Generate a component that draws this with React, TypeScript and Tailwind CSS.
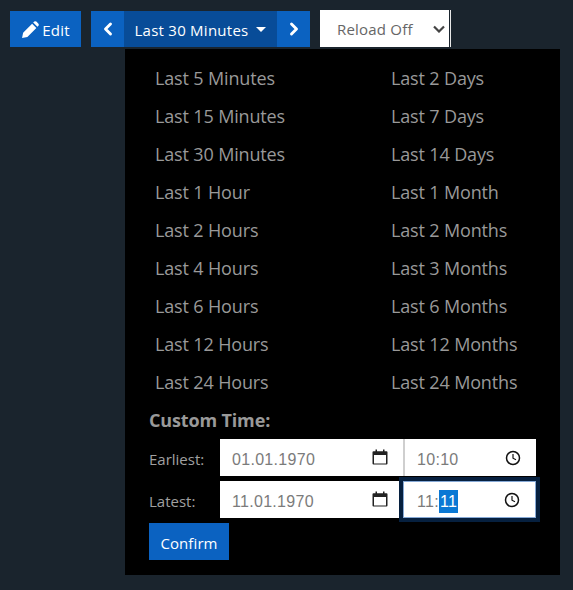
import { ChevronLeft, ChevronRight } from "lucide-react"

const leftRanges = ["Last 5 Minutes", "Last 15 Minutes", "Last 30 Minutes", "Last 1 Hour", "Last 2 Hours", "Last 4 Hours", "Last 6 Hours", "Last 12 Hours", "Last 24 Hours"]
const rightRanges = ["Last 2 Days", "Last 7 Days", "Last 14 Days", "Last 1 Month", "Last 2 Months", "Last 3 Months", "Last 6 Months", "Last 12 Months", "Last 24 Months"]

function CalendarIcon() {
  return (
    <svg width="16" height="16" viewBox="0 0 16 16" className="-mt-px text-[#222]">
      <path fill="currentColor" d="M1.5 2.2h2V0.6H5v1.6h6V0.6h1.5v1.6h2q1 0 1 1v11.4q0 1-1 1h-13q-1 0-1-1V3.2q0-1 1-1zM2 6v8.2q0 .3.3.3h11.4q.3 0 .3-.3V6H2z" />
    </svg>
  )
}

function ClockIcon() {
  return (
    <svg width="16" height="16" viewBox="0 0 16 16" fill="none" stroke="#111" strokeWidth="1.5">
      <circle cx="8" cy="8" r="6.5" />
      <path d="M8 4v4.2l3 1.6" strokeWidth="1.2" />
    </svg>
  )
}

function DateTimeRow(props: { label: string; date: string; hours: string; minutes: string; active?: boolean }) {
  return (
    <div className="flex items-center h-[37px]">
      <span className="w-[71px] pt-[4px] text-[15px] text-[#a0a0a0]">{props.label}</span>
      <div className="flex h-full w-[183px] items-center justify-between bg-white pl-3 pr-[15px] text-[16px] text-[#7b7b7b] font-['Liberation_Sans',sans-serif] tracking-[0.3px]">
        <span className="pt-[4px]">{props.date}</span>
        <CalendarIcon />
      </div>
      <div className={props.active ? "relative flex h-full w-[133px] items-center justify-between bg-white pl-[13px] pr-[15px] text-[16px] text-[#7b7b7b] font-['Liberation_Sans',sans-serif] tracking-[0.3px] border border-[#86a9d6] outline-4 outline-[#06203f]" : "flex h-full w-[133px] items-center justify-between bg-white border-l-2 border-[#cfcfcf] pl-3 pr-[15px] text-[16px] text-[#7b7b7b] font-['Liberation_Sans',sans-serif] tracking-[0.3px]"}>
        <span className="pt-[4px]">
          {props.hours}:
          {props.active ? <span className="bg-[#0a78d4] px-[1px] py-[3px] text-white">{props.minutes}</span> : props.minutes}
        </span>
        <ClockIcon />
      </div>
    </div>
  )
}

export default function App() {
  return (
    <div className="h-[590px] w-[573px] overflow-hidden bg-[#1a242d] font-['Open_Sans',sans-serif]">
      <div className="relative flex items-start gap-[10px] pl-[10px] pt-[11px]">
        <button className="flex h-[36px] w-[71px] items-center justify-center gap-[3px] bg-[#0b62c1] text-[15px] tracking-[0.2px] text-white">
          <svg width="18" height="18" viewBox="0 0 17 17" fill="white" className="mt-[2px]">
            <path d="M1 16l1-5L10.5 2.5l4 4L6 15zM11.5 1.5l1-1q1-.6 2 0l2 2q.6 1 0 2l-1 1z" />
          </svg>
          <span className="pt-[2px]">Edit</span>
        </button>
        <div className="flex h-[36px] text-white">
          <button className="flex w-[33px] items-center justify-center bg-[#0b62c1]">
            <ChevronLeft size={20} strokeWidth={3.5} />
          </button>
          <button className="flex w-[153px] items-center justify-center gap-[8px] bg-[#084c98] text-[15px] tracking-[0.25px]">
            <span className="pt-[2px]">Last 30 Minutes</span>
            <span className="h-0 w-0 border-x-[5px] border-t-[5px] border-x-transparent border-t-white" />
          </button>
          <button className="flex w-[33px] items-center justify-center bg-[#0b62c1]">
            <ChevronRight size={20} strokeWidth={3.5} />
          </button>
        </div>
        <div className="-mt-px flex h-[37px] w-[131px] items-center justify-between bg-white pl-[17px] pr-[6px] text-[15px] tracking-[0.2px] text-[#666] shadow-[inset_-1px_0_0_#e8e8e8,inset_-2px_0_0_#1a242d]">
          <span className="pt-[2px]">Reload Off</span>
          <svg width="12" height="8" viewBox="0 0 12 8" fill="none" stroke="#444" strokeWidth="2.2">
            <path d="M1 1.5l5 5 5-5" />
          </svg>
        </div>

        <div className="absolute left-[125px] top-[49px] h-[526px] w-[435px] bg-black pl-[24px] pt-[10px]">
          <div className="grid w-[400px] grid-cols-[236px_1fr] pl-[6px] text-[18px] tracking-[-0.15px] text-[#999999]">
            <div>
              {leftRanges.map((r) => (
                <div key={r} className="flex h-[38px] items-center">{r}</div>
              ))}
            </div>
            <div>
              {rightRanges.map((r) => (
                <div key={r} className="flex h-[38px] items-center">{r}</div>
              ))}
            </div>
          </div>
          <div className="flex h-[38px] items-center text-[18px] font-bold tracking-[-0.15px] text-[#999999]">Custom Time:</div>
          <div className="flex flex-col gap-[5px]">
            <DateTimeRow label="Earliest:" date="01.01.1970" hours="10" minutes="10" />
            <DateTimeRow label="Latest:" date="11.01.1970" hours="11" minutes="11" active />
          </div>
          <button className="mt-[5px] h-[37px] w-[80px] bg-[#0b62c1] pt-[4px] text-[15px] tracking-[0.1px] text-white">Confirm</button>
        </div>
      </div>
    </div>
  )
}
